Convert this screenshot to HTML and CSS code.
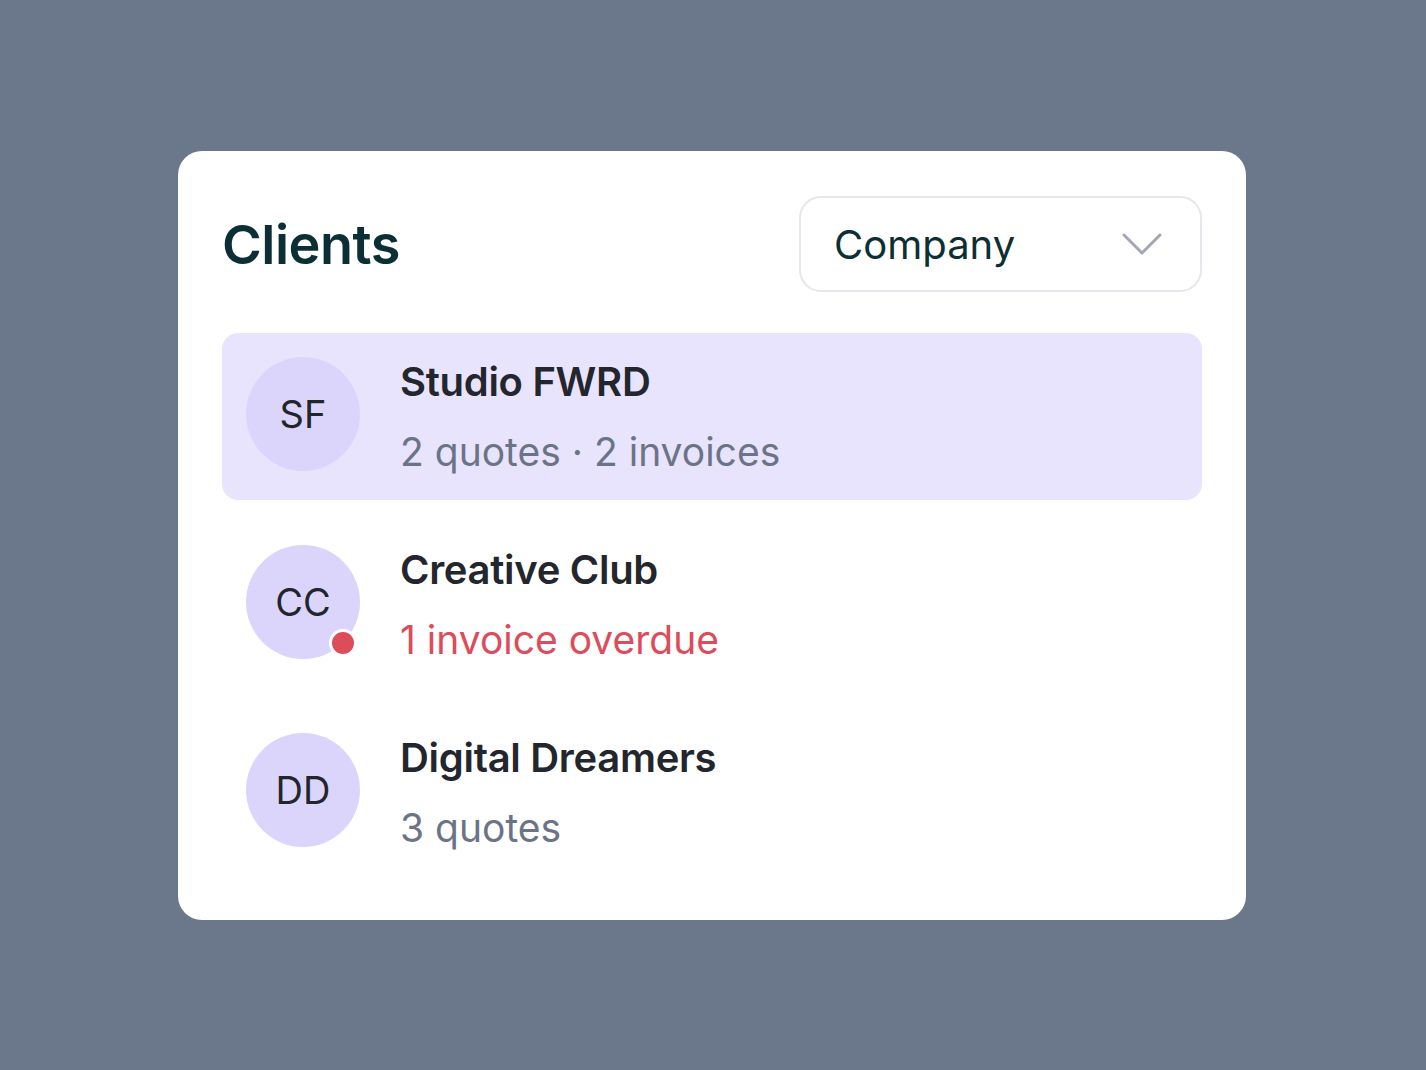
FILE: index.html
```html
<!DOCTYPE html>
<html lang="en">
<head>
<meta charset="utf-8">
<title>Clients</title>
<link rel="stylesheet" href="styles.css">
</head>
<body>
<main class="stage">
  <section class="card">
    <header class="card-head">
      <h1 class="title">Clients</h1>
      <button class="select" type="button">
        <span class="select-label">Company</span>
        <svg class="chev" width="40" height="22" viewBox="0 0 40 22" aria-hidden="true"><path d="M2 2 L20 20 L38 2" fill="none" stroke="#a3a6b5" stroke-width="3" stroke-linecap="round" stroke-linejoin="round"/></svg>
      </button>
    </header>
    <ul class="list">
      <li class="row row-active">
        <div class="avatar">SF</div>
        <div class="info">
          <div class="name">Studio FWRD</div>
          <div class="meta">2 quotes · 2 invoices</div>
        </div>
      </li>
      <li class="row">
        <div class="avatar">CC<span class="dot"></span></div>
        <div class="info">
          <div class="name">Creative Club</div>
          <div class="meta meta-alert">1 invoice overdue</div>
        </div>
      </li>
      <li class="row">
        <div class="avatar">DD</div>
        <div class="info">
          <div class="name">Digital Dreamers</div>
          <div class="meta">3 quotes</div>
        </div>
      </li>
    </ul>
  </section>
</main>
</body>
</html>
```

FILE: styles.css
```css
* { box-sizing: border-box; }
html, body { margin: 0; padding: 0; }
body {
  background: #6b778a;
  font-family: Inter, "Noto Sans", "Liberation Sans", sans-serif;
  min-height: 1070px;
}
.stage {
  min-height: 1070px;
  display: flex;
  align-items: center;
  justify-content: center;
  padding: 1px 2px 0 0;
}
.card {
  width: 1068px;
  background: #ffffff;
  border-radius: 24px;
  padding: 45px 44px 44px;
}
.card-head {
  display: flex;
  align-items: center;
  justify-content: space-between;
  margin-bottom: 41px;
}
.title {
  margin: 0;
  font-size: 54px;
  font-weight: 600;
  color: #0c2f35;
  letter-spacing: -0.5px;
}
.select {
  width: 403px;
  height: 96px;
  border: 2px solid #e6e6ed;
  border-radius: 22px;
  background: #fff;
  display: flex;
  align-items: center;
  justify-content: space-between;
  padding: 0 38px 0 33px;
  font-family: inherit;
  cursor: pointer;
}
.select-label {
  font-size: 40px;
  font-weight: 400;
  color: #0c2f35;
}
.chev { display: block; }
.list {
  list-style: none;
  margin: 0;
  padding: 0;
  display: flex;
  flex-direction: column;
  gap: 21px;
}
.row {
  height: 167px;
  display: flex;
  align-items: center;
  gap: 40px;
  padding: 0 24px;
  border-radius: 16px;
}
.row-active { background: #e8e4fd; }
.avatar {
  position: relative;
  width: 114px;
  height: 114px;
  flex: none;
  margin-bottom: 5px;
  border-radius: 50%;
  background: #dbd5fc;
  display: flex;
  align-items: center;
  justify-content: center;
  font-size: 38px;
  color: #22252c;
}
.dot {
  position: absolute;
  width: 28px;
  height: 28px;
  right: 3px;
  bottom: 2px;
  border-radius: 50%;
  background: #dc4c5a;
  border: 3px solid #ffffff;
}
.info {
  display: flex;
  flex-direction: column;
  gap: 20px;
  padding-top: 1px;
}
.name {
  font-size: 40px;
  line-height: 50px;
  font-weight: 600;
  color: #23262d;
  letter-spacing: -0.3px;
}
.meta {
  font-size: 39px;
  line-height: 50px;
  color: #6b7487;
}
.meta-alert { color: #dc4c5a; }
```
